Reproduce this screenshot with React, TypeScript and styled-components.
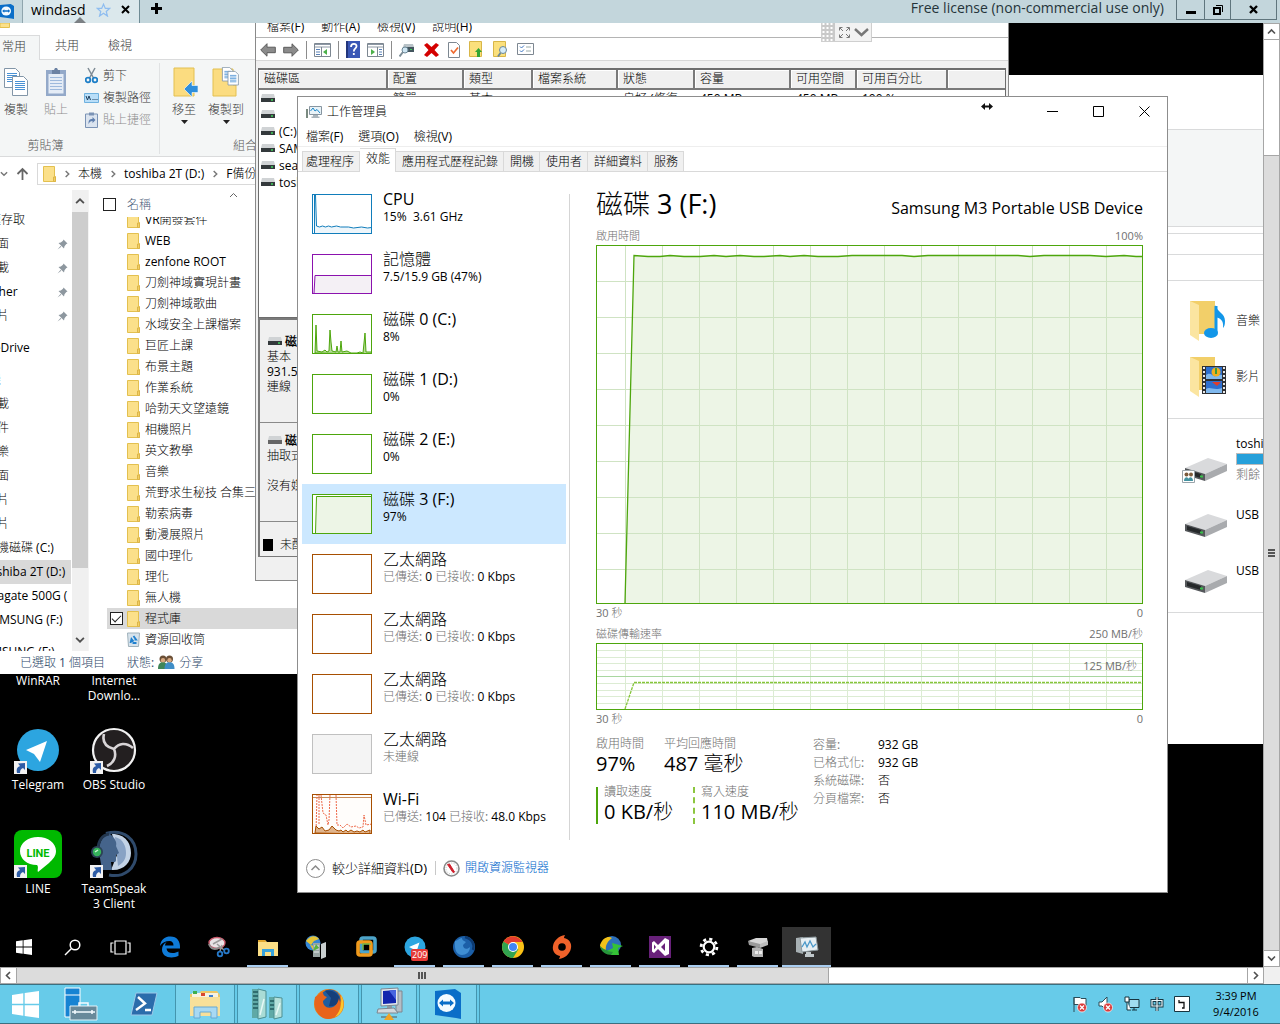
import React from "react";
import styled, { createGlobalStyle, css } from "styled-components";

const Global = createGlobalStyle`
  *, *::before, *::after { box-sizing: border-box; }
  html, body { margin: 0; height: 100%; overflow: hidden; }
  body, button, input, table {
    font-family: "Open Sans", "Noto Sans CJK TC Light", "Noto Sans CJK TC", sans-serif;
    font-size: 12px;
    line-height: 16px;
    color: #000;
  }
  button { background: none; border: 0; padding: 0; margin: 0; text-align: left; white-space: nowrap; }
  h1, h2, p, ul, dl, dd, dt { margin: 0; padding: 0; font-weight: 400; }
  ul { list-style: none; }
  a { text-decoration: none; }
  svg { display: block; flex: none; }
`;

const Screen = styled.div`
  display: flex;
  flex-direction: column;
  height: 100vh;
  background: #c3d7dd;
`;

/* ---------- viewer title bar ---------- */

const ViewerBar = styled.header`
  flex: none;
  display: flex;
  height: 23px;
  background: #c3d6dc;
`;
const ViewerTabs = styled.div`
  display: flex;
  flex: 1;
`;
const HomeTab = styled.button`
  width: 23px;
  border-right: 1px solid #8fa5ad;
`;
const SessionTab = styled.div`
  position: relative;
  display: flex;
  align-items: center;
  gap: 10px;
  width: 117px;
  padding-left: 8px;
  padding-bottom: 4px;
  background: #dbe8ec;
  border-right: 1px solid #6f8b95;
  font-size: 14px;
  line-height: 18px;
`;
const TabPointer = styled.i`
  position: absolute;
  left: 51px;
  bottom: 0;
  border: 6px solid transparent;
  border-top: 0;
  border-bottom-color: #7b8084;
`;
const AddTab = styled.button`
  padding: 3px 0 0 11px;
  align-self: flex-start;
`;
const License = styled.p`
  padding-right: 12px;
  font-size: 14px;
  line-height: 15px;
  color: #25343a;
`;
const ViewerButtons = styled.div`
  display: flex;
  height: 20px;
  margin-right: 3px;
  border: 1px solid #5f757d;
  border-top: 0;
`;
const ViewerButton = styled.button<{ $w: number }>`
  display: grid;
  place-items: center;
  width: ${(p) => p.$w}px;
  & + & { border-left: 1px solid #5f757d; }
`;

/* ---------- remote surface ---------- */

const Middle = styled.div`
  flex: 1;
  min-height: 0;
  display: flex;
`;
const Remote = styled.main`
  position: relative;
  flex: 1;
  min-width: 0;
  overflow: hidden;
  background: #000;
`;
const Win = styled.section<{ $x: number; $y: number; $w?: number; $h?: number }>`
  position: absolute;
  left: ${(p) => p.$x}px;
  top: ${(p) => p.$y}px;
  ${(p) => (p.$w ? `width: ${p.$w}px;` : "right: 0;")}
  ${(p) => p.$h && `height: ${p.$h}px;`}
  display: flex;
  flex-direction: column;
  overflow: hidden;
  background: #fff;
  white-space: nowrap;
`;

/* ---------- scroll bars ---------- */

const ScrollButton = styled.button`
  display: grid;
  place-items: center;
  width: 17px;
  height: 17px;
  flex: none;
  background: #fff;
  border: 1px solid #a6a6a6;
`;
const VBar = styled.div`
  display: flex;
  flex-direction: column;
  width: 17px;
  background: #fff;
  border-right: 1px solid #a6a6a6;
  border-left: 1px solid #a6a6a6;
  ${ScrollButton} { width: 15px; border-width: 1px 0; }
`;
const VThumb = styled.div`
  flex: 1;
  margin-top: 115px;
  display: grid;
  place-items: center;
  background: #dcdcdc;
  border-top: 1px solid #a6a6a6;
`;
const HBar = styled.div`
  flex: none;
  display: flex;
  height: 17px;
  padding-right: 16px;
  background: #f0f0f0;
`;
const HTrack = styled.div`
  flex: 1;
  background: #fff;
  border: 1px solid #a6a6a6;
  border-width: 1px 0;
`;
const HThumb = styled.div`
  display: grid;
  place-items: center;
  width: 66%;
  height: 100%;
  background: #dcdcdc;
  border-right: 1px solid #a6a6a6;
`;

/* ---------- explorer (left) ---------- */

const ExplorerTop = styled.div`
  height: 12px;
  flex: none;
`;
const RibbonTabs = styled.div`
  display: flex;
  flex: none;
  height: 25px;
  border-bottom: 1px solid #dadbdc;
`;
const RibbonTab = styled.button<{ $on?: boolean }>`
  padding: 0 14px 2px 15px;
  color: #3b3b3b;
  ${(p) =>
    p.$on &&
    css`
      width: 40px;
      padding-left: 2px;
      margin-bottom: -1px;
      background: #f4f6f6;
      border: 1px solid #dadbdc;
      border-width: 1px 1px 0 0;
    `}
`;
const Ribbon = styled.div`
  flex: none;
  display: flex;
  height: 97px;
  background: #f4f6f6;
  border-bottom: 1px solid #dadbdc;
`;
const RibbonGroup = styled.div<{ $w: number }>`
  flex: none;
  display: flex;
  flex-direction: column;
  justify-content: space-between;
  width: ${(p) => p.$w}px;
  margin: 3px 0 2px;
  border-right: 1px solid #e0e2e3;
`;
const GroupRow = styled.div`
  display: flex;
  padding-top: 4px;
`;
const GroupName = styled.p<{ $right?: boolean }>`
  padding: 0 68px 0 0;
  text-align: center;
  color: #5a5a5a;
  ${(p) => p.$right && "padding: 0 0 0 73px; text-align: left;"}
`;
const BigTool = styled.button<{ $w?: number; $off?: boolean }>`
  display: flex;
  flex-direction: column;
  align-items: center;
  gap: 2px;
  width: ${(p) => p.$w || 42}px;
  color: ${(p) => (p.$off ? "#8d8d8d" : "#3b3b3b")};
  svg:first-child { margin-bottom: 3px; }
`;
const SmallTools = styled.div`
  display: flex;
  flex-direction: column;
  gap: 6px;
  padding-left: 4px;
`;
const SmallTool = styled.button<{ $off?: boolean }>`
  display: grid;
  grid-template-columns: 15px auto;
  justify-content: start;
  justify-items: center;
  gap: 4px;
  align-items: center;
  color: ${(p) => (p.$off ? "#8d8d8d" : "#3b3b3b")};
`;
const AddressRow = styled.div`
  flex: none;
  display: flex;
  align-items: center;
  gap: 8px;
  height: 33px;
`;
const AddressBox = styled.nav`
  flex: 1;
  display: flex;
  align-items: center;
  gap: 7px;
  height: 22px;
  padding-left: 5px;
  border: 1px solid #d9d9d9;
`;
const Panes = styled.div`
  flex: 1;
  min-height: 0;
  display: flex;
`;
const NavPane = styled.ul`
  width: 72px;
  flex: none;
  overflow: hidden;
  padding-top: 18px;
`;
const NavItem = styled.li<{ $child?: boolean; $on?: boolean; $gap?: boolean; $blue?: boolean }>`
  display: flex;
  justify-content: space-between;
  align-items: center;
  height: 24px;
  margin-left: -23px;
  padding: 0 4px 0 ${(p) => (p.$child ? 8 : 0)}px;
  ${(p) => p.$gap && "margin-top: 8px;"}
  ${(p) => p.$on && "background: #d9d9d9; margin-right: 1px;"}
  ${(p) => p.$blue && "color: #3a86c8;"}
`;
const NavScroll = styled.div`
  flex: none;
  display: flex;
  flex-direction: column;
  width: 17px;
  margin-right: 14px;
  background: #f0f0f0;
  border-right: 1px solid #f4f4f4;
  div { flex: 1; margin-bottom: 61px; background: #cdcdcd; }
  svg { margin: 6px 3px; }
`;
const Files = styled.div`
  flex: 1;
  min-width: 0;
  overflow: hidden;
`;
const FileHead = styled.div`
  position: relative;
  display: flex;
  align-items: center;
  gap: 11px;
  height: 27px;
  padding-top: 2px;
  color: #4c607a;
  svg { position: absolute; left: 126px; top: 0; }
`;
const FileList = styled.ul`
  height: 433px;
  overflow: hidden;
  display: flex;
  flex-direction: column;
  justify-content: flex-end;
`;
const FileRow = styled.li<{ $on?: boolean }>`
  flex: none;
  display: flex;
  align-items: center;
  gap: ${(p) => (p.$on ? 4 : 5)}px;
  height: 21px;
  margin-left: 4px;
  padding-left: ${(p) => (p.$on ? 3 : 20)}px;
  ${(p) => p.$on && "background: #d9d9d9;"}
`;
const Check = styled.input`
  appearance: none;
  display: grid;
  place-items: center;
  width: 13px;
  height: 13px;
  margin: 0;
  border: 1px solid #222;
  background: #fff;
  &:checked::after {
    content: "";
    width: 9px;
    height: 5px;
    margin-bottom: 3px;
    border: 1px solid #222;
    border-width: 0 0 1px 1px;
    transform: rotate(-45deg);
  }
`;
const FileLabel = styled.label`
  display: flex;
  align-items: center;
  gap: 5px;
`;
const Status = styled.footer`
  flex: none;
  display: flex;
  align-items: center;
  gap: 22px;
  height: 23px;
  padding-left: 20px;
  color: #2d4768;
  span { display: flex; align-items: center; gap: 4px; }
`;

/* ---------- disk management ---------- */

const DiskMenu = styled.nav`
  display: flex;
  gap: 17px;
  height: 15px;
  flex: none;
  padding-left: 11px;
  border-bottom: 1px solid #b4b4b4;
  button { margin-top: -6px; }
`;
const DiskTools = styled.div`
  display: flex;
  align-items: center;
  gap: 7px;
  height: 23px;
  flex: none;
  padding: 1px 0 0 4px;
  border-bottom: 1px solid #d6d6d6;
`;
const ToolSet = styled.div`
  display: flex;
  align-items: center;
  gap: 9px;
`;
const ToolSep = styled.i`
  width: 1px;
  height: 18px;
  background: #8c8c8c;
`;
const VolTable = styled.table`
  table-layout: fixed;
  width: 748px;
  border-collapse: collapse;
  th {
    height: 19px;
    padding: 0 6px 0 5px;
    text-align: left;
    font-weight: 400;
    background: #f0f0f0;
    border-right: 2px solid #7a7a7a;
    border-bottom: 2px solid #7a7a7a;
    box-shadow: inset 1px 1px #fff;
  }
  th:last-child { border-right: 0; }
  td { height: 17px; padding: 0 6px; line-height: 15px; }
  td:first-child { padding-left: 2px; }
`;
const VolName = styled.span`
  display: flex;
  align-items: center;
  gap: 4px;
`;
const VolBox = styled.div`
  height: 250px;
  flex: none;
  margin: 7px 2px 0 2px;
  border: 1px solid #6d6d6d;
  border-top-width: 2px;
  background: #fff;
  overflow: hidden;
`;
const DiskPane = styled.div`
  flex: none;
  margin: 0 2px;
  border: 2px solid #7a7a7a;
  border-width: 2px 0 1px 2px;
`;
const DiskCard = styled.div<{ $h: number; $top: number }>`
  height: ${(p) => p.$h}px;
  padding: ${(p) => p.$top}px 0 0 7px;
  line-height: 15px;
  border-bottom: 1px solid #8a8a8a;
  b { display: flex; align-items: center; gap: 3px; padding-left: 1px; }
`;
const Legend = styled.p`
  display: flex;
  align-items: center;
  gap: 7px;
  height: 34px;
  padding: 12px 0 0 3px;
  i { width: 10px; height: 12px; background: #000; }
`;

/* ---------- right explorer ---------- */

const PcBand = styled.div<{ $h: number; $c?: string }>`
  flex: none;
  height: ${(p) => p.$h}px;
  background: ${(p) => p.$c || "#fff"};
  border-bottom: 1px solid #d9dadb;
`;
const PcGroup = styled.div<{ $drives?: boolean }>`
  display: flex;
  flex-direction: column;
  gap: 6px;
  padding: 15px 0 16px 173px;
  border-bottom: 1px solid #d9dadb;
  ${(p) => p.$drives && "svg { margin: 22px 4px 0 0; }"}
`;
const PcItem = styled.button`
  display: grid;
  grid-template-columns: 50px 1fr;
  align-items: center;
  gap: 4px;
  height: 50px;
  svg { justify-self: center; }
`;
const Capacity = styled.div`
  height: 12px;
  margin: 1px 0 2px;
  background: #26a0da;
  border: 1px solid #bcbcbc;
`;
const Muted = styled.span`
  color: #6f6f6f;
`;

/* ---------- task manager ---------- */

const TmTitle = styled.header`
  display: flex;
  align-items: center;
  height: 29px;
  padding-left: 8px;
  h1 { flex: 1; padding-left: 5px; font-size: 12px; }
`;
const CaptionButton = styled.button`
  display: grid;
  place-items: center;
  width: 46px;
  height: 28px;
`;
const TmMenu = styled.nav`
  display: flex;
  gap: 15px;
  height: 21px;
  padding: 2px 8px 0;
  border-bottom: 1px solid #eeeeee;
`;
const TmTabs = styled.div`
  display: flex;
  align-items: flex-end;
  height: 25px;
  padding-left: 4px;
  border-bottom: 1px solid #d9d9d9;
`;
const TmTab = styled.button<{ $on?: boolean }>`
  height: 20px;
  padding: 0 5px 0 6px;
  background: #f0f0f0;
  border: 1px solid #d9d9d9;
  border-left-width: 0;
  border-bottom: 0;
  &:first-child { padding: 0 5px 0 3px; border-left-width: 1px; }
  ${(p) =>
    p.$on &&
    css`
      height: 24px;
      padding: 0 5px 4px 6px;
      margin-bottom: -1px;
      background: #fff;
    `}
`;
const TmBody = styled.div`
  display: flex;
  padding: 12px 24px 0 4px;
`;
const ResourceList = styled.ul`
  width: 264px;
  flex: none;
`;
const Resource = styled.button<{ $on?: boolean }>`
  display: flex;
  align-items: flex-start;
  gap: 11px;
  width: 100%;
  height: 60px;
  padding: 10px;
  background: ${(p) => (p.$on ? "#cce8ff" : "transparent")};
`;
const ResourceText = styled.span`
  margin-top: -5px;
  line-height: 16px;
  white-space: pre;
`;
const ResourceName = styled.span`
  display: block;
  font-size: 16px;
  line-height: 20px;
`;
const Divider = styled.i`
  flex: none;
  width: 1px;
  margin: 10px 26px 4px 3px;
  background: #d5d5d5;
`;
const Detail = styled.div`
  flex: 1;
  min-width: 0;
`;
const DetailHead = styled.div`
  display: flex;
  justify-content: space-between;
  align-items: baseline;
  height: 44px;
  padding-top: 4px;
  h2 { font-size: 27px; line-height: 32px; }
  p { font-size: 16px; line-height: 24px; }
`;
const Caption = styled.div`
  display: flex;
  justify-content: space-between;
  height: 17px;
  font-size: 11px;
  line-height: 15px;
  color: #707070;
`;
const Axis = styled(Caption)`
  height: 22px;
  line-height: 18px;
`;
const Plot = styled.div<{ $h: number }>`
  position: relative;
  height: ${(p) => p.$h}px;
  border: 1px solid #4da60c;
  svg { width: 100%; height: 100%; }
`;
const PlotMark = styled.span`
  position: absolute;
  right: 5px;
  top: 14px;
  font-size: 11px;
  line-height: 16px;
  color: #707070;
`;
const Stats = styled.div`
  display: flex;
  padding-top: 4px;
`;
const StatGrid = styled.dl`
  width: 217px;
  display: flex;
  flex-direction: column;
  gap: 11px;
`;
const Stat = styled.div<{ $line?: "solid" | "dotted"; $w: number }>`
  width: ${(p) => p.$w}px;
  height: 40px;
  dt { line-height: 16px; color: #707070; }
  dd { font-size: 20px; line-height: 24px; }
  ${(p) =>
    p.$line &&
    css`
      height: 37px;
      padding-left: 6px;
      border-left: 2px ${p.$line === "solid" ? "solid #4da60c" : "dashed #8cc63f"};
      dt { margin-top: -3px; }
    `}
`;
const StatRow = styled.div`
  display: flex;
`;
const Facts = styled.dl`
  display: grid;
  grid-template-columns: 65px auto;
  align-content: start;
  line-height: 18px;
  dt { color: #707070; }
`;
const TmFooter = styled.footer`
  display: flex;
  align-items: center;
  height: 48px;
  padding-left: 8px;
  button { display: flex; align-items: center; gap: 7px; font-size: 13px; }
  a { display: flex; align-items: center; gap: 5px; color: #0066cc; }
  i { width: 1px; height: 14px; margin: 0 7px 0 8px; background: #c8c8c8; }
`;

/* ---------- desktop ---------- */

const Desktop = styled.div`
  position: absolute;
  left: 0;
  top: 599px;
  display: grid;
  grid-template-columns: repeat(2, 76px);
  grid-auto-rows: 104px;
`;
const Shortcut = styled.button`
  position: relative;
  display: flex;
  flex-direction: column;
  align-items: center;
  gap: 3px;
  padding: 0 3px;
  text-align: center;
  line-height: 15px;
  color: #fff;
  white-space: normal;
  > svg:nth-of-type(2) { position: absolute; left: 14px; top: 35px; }
`;
const Blank = styled.i`
  height: 48px;
`;
const InnerBar = styled.nav`
  position: absolute;
  left: 0;
  right: 0;
  bottom: 0;
  display: flex;
  height: 40px;
  background: #000;
`;
const InnerButton = styled.button<{ $w?: number; $run?: boolean; $on?: boolean }>`
  position: relative;
  display: grid;
  place-items: center;
  width: ${(p) => p.$w || 49}px;
  color: #fff;
  ${(p) => p.$on && "background: #333;"}
  ${(p) =>
    (p.$run || p.$on) &&
    css`
      &::after {
        content: "";
        position: absolute;
        left: ${p.$on ? 0 : 4}px;
        right: ${p.$on ? 0 : 4}px;
        bottom: 0;
        height: 2px;
        background: #a9cdf0;
      }
    `}
`;
const Badge = styled.span`
  position: absolute;
  left: 21px;
  top: 22px;
  padding: 0 1px;
  border-radius: 2px;
  background: #e53935;
  color: #fff;
  font-size: 9px;
  line-height: 12px;
`;
const FloatBar = styled.div`
  position: absolute;
  left: 821px;
  top: 0;
  display: flex;
  align-items: center;
  gap: 4px;
  width: 51px;
  height: 19px;
  background: #f2f2f2;
  border: 1px solid #cfcfcf;
  border-top: 0;
`;
const ResizeCursor = styled.svg`
  position: absolute;
  left: 981px;
  top: 79px;
`;

/* ---------- host taskbar ---------- */

const HostBar = styled.footer`
  flex: none;
  display: flex;
  height: 40px;
  background: #67cbe9;
  border: 1px solid #3b6f80;
  border-width: 1px 0;
`;
const HostButton = styled.button<{ $w: number; $open?: boolean }>`
  display: grid;
  place-items: center;
  width: ${(p) => p.$w}px;
  ${(p) =>
    p.$open &&
    css`
      margin-right: 2px;
      background: #7ad3ed;
      border: 1px solid #4495ae;
      border-width: 0 1px;
      box-shadow: 2px 0 #67cbe9, 3px 0 #4495ae;
    `}
`;
const Tray = styled.div`
  flex: 1;
  display: flex;
  justify-content: flex-end;
  align-items: center;
  gap: 10px;
`;
const Clock = styled.time`
  width: 72px;
  margin-right: 8px;
  text-align: center;
  font-size: 11px;
  line-height: 16px;
`;

/* ---------- icons ---------- */

const Chevron = ({ d, c = "#505050", s = 9 }: { d: "u" | "d" | "l" | "r"; c?: string; s?: number }) => (
  <svg width={s} height={s} viewBox="0 0 9 9" fill="none" stroke={c} strokeWidth="1.600">
    <path d={{ u: "M1 6.5 4.5 3 8 6.5", d: "M1 2.5 4.5 6 8 2.5", l: "M6 1 2.5 4.5 6 8", r: "M3 1l3.5 3.5L3 8" }[d]} />
  </svg>
);
const Folder = () => (
  <svg width="13" height="16" viewBox="0 0 13 16">
    <path d="M.5.5h11v10h1v5H.5z" fill="#fbe08a" stroke="#e3c04f" />
    <path d="M10.5 11h2v4.5h-2z" fill="#f3cf63" stroke="#dcb548" />
  </svg>
);
const Bin = () => (
  <svg width="13" height="15" viewBox="0 0 13 15">
    <path d="M.5 1h12l-1 13.500h-10z" fill="#d7e3ec" stroke="#9fb1bb" />
    <path d="M6.500 4 9 7.500H7.500M3.500 11l1-4 2 2.500M9.500 11H5.500" fill="none" stroke="#2181cf" strokeWidth="1.900" />
  </svg>
);
const People = () => (
  <svg width="17" height="15" viewBox="0 0 17 15">
    <circle cx="5" cy="4" r="3.500" fill="#6b4f36" />
    <path d="M0 14c0-5 2-7 5-7s4 2 4 7z" fill="#3f8558" />
    <circle cx="11.500" cy="4" r="3.500" fill="#6b4f36" />
    <path d="M6.500 14c0-5 2-7 5-7s5 2 5 7z" fill="#3f8dc6" />
    <circle cx="5" cy="5.200" r="2.200" fill="#d9a981" />
    <circle cx="11.500" cy="5.200" r="2.200" fill="#d9a981" />
  </svg>
);
const Pin = () => (
  <svg width="11" height="11" viewBox="0 0 11 11">
    <path d="M6.500.5 10.500 4.500 9.300 5 7.500 7.200 7 9.500 1.500 4l2.300-.6L6 1.700zM3.500 7 .5 10.500 4.300 7.700z" fill="#8d979f" />
  </svg>
);
const Paper = ({ x, y, w = 15, h = 19 }: { x: number; y: number; w?: number; h?: number }) => (
  <g transform={`translate(${x} ${y})`}>
    <path d={`M.5.5h${w - 5}l4 4v${h - 5}H.5z`} fill="#fff" stroke="#8296a8" />
    {[5, 7, 9, 11, 13].map((l) => (
      <path key={l} d={`M3 ${l + 0.5}h${w - 6}`} stroke="#4a92d4" />
    ))}
  </g>
);
const CopyIcon = () => (
  <svg width="26" height="30" viewBox="0 0 26 30">
    <Paper x={1} y={1} w={16} h={20} />
    <Paper x={9} y={9} w={16} h={20} />
  </svg>
);
const PasteIcon = () => (
  <svg width="22" height="30" viewBox="0 0 22 30">
    <path d="M1 3h20v26H1z" fill="#93a9c9" />
    <path d="M3.500 7h15v19.500h-15z" fill="#e4ecf6" />
    <path d="M7 3h2l1-2h2l1 2h2v4H7z" fill="#6b82a3" />
    <path d="M5 10.500h12M5 13.500h12M5 16.500h12M5 19.500h12M5 22.500h12" stroke="#9db9dc" />
  </svg>
);
const Scissors = () => (
  <svg width="13" height="17" viewBox="0 0 13 17" fill="none">
    <path d="M3 1l5.500 10M10 1 4.500 11" stroke="#7e8b95" strokeWidth="1.500" />
    <circle cx="3" cy="13" r="2.300" stroke="#1e7fc8" strokeWidth="1.800" />
    <circle cx="10" cy="13" r="2.300" stroke="#1e7fc8" strokeWidth="1.800" />
  </svg>
);
const PathIcon = () => (
  <svg width="15" height="10" viewBox="0 0 15 10">
    <path d="M.5.5h14v9H.5z" fill="#b9def8" stroke="#6fb1de" />
    <path d="M2 3l1.500 4L5 3l1.500 4M8.500 6.500h1M10.500 6.500h1M12.500 6.500h1" stroke="#1d3f5e" fill="none" />
  </svg>
);
const ShortcutPaste = () => (
  <svg width="13" height="16" viewBox="0 0 13 16">
    <path d="M.5 2h12v13.500H.5z" fill="#dbe4ef" stroke="#7b93b5" />
    <path d="M4 .500h5v3H4z" fill="#7b93b5" />
    <path d="M3.500 12c0-4 1-5 4-5V5l3 3-3 3V9c-2 0-3 1-4 3z" fill="#5f7fae" />
  </svg>
);
const MoveTo = () => (
  <svg width="28" height="30" viewBox="0 0 28 30">
    <path d="M4 1h20v28H4z" fill="#fbdc80" stroke="#e3c050" />
    <path d="M28 18.500h-6V14l-8 8 8 8v-4.500h6z" fill="#2f8fdc" stroke="#fff" strokeWidth=".6" />
  </svg>
);
const CopyTo = () => (
  <svg width="28" height="30" viewBox="0 0 28 30">
    <path d="M1 2h20v16h3v11H1z" fill="#fbdc80" stroke="#e3c050" />
    <g transform="translate(10 0) scale(.8)">
      <Paper x={0} y={0} w={14} h={18} />
      <Paper x={7} y={5} w={14} h={18} />
    </g>
  </svg>
);
const Down = () => (
  <svg width="7" height="4" viewBox="0 0 7 4">
    <path d="M0 0h7L3.500 4z" fill="#222" />
  </svg>
);
const DriveSmall = ({ off }: { off?: boolean }) => (
  <svg width="14" height="9" viewBox="0 0 14 9">
    <path d="M1 0h12l1 4H0z" fill="#d0d3d5" />
    <path d="M0 4h14v4H0z" fill={off ? "#666" : "#34393c"} />
    {!off && <path d="M10 6h2" stroke="#3fd35b" strokeWidth="1.500" />}
  </svg>
);
const Arrow = ({ flip }: { flip?: boolean }) => (
  <svg width="16" height="14" viewBox="0 0 16 14">
    <path d="M7 .700v3.500h8.300v5.500H7v3.500L.700 7z" fill="#8b8b8b" stroke="#5c5c5c" transform={flip ? "rotate(180 8 7)" : undefined} />
  </svg>
);
const PaneIcon = ({ flip }: { flip?: boolean }) => (
  <svg width="17" height="14" viewBox="0 0 17 14">
    <path d="M.5.500h16v13H.5z" fill="#fff" stroke="#7d8791" />
    <path d="M1 1.500h15M1 4h15" stroke="#8d98a5" />
    <path d={flip ? "M10.500 4v9" : "M7.500 4v9"} stroke="#7d8791" />
    <path d={flip ? "M12 6.500h3M12 9h3M12 11.500h3" : "M2 6.500h4M2 9h4M2 11.500h4"} stroke="#5a82b8" />
    <path d={flip ? "M4 6l4 3-4 3z" : "M13 6 9 9l4 3z"} fill="#4cb04a" />
  </svg>
);
const HelpIcon = () => (
  <svg width="14" height="17" viewBox="0 0 14 17">
    <path d="M0 0h14v17H0z" fill="#3a57b5" />
    <path d="M0 0h2v17H0z" fill="#23367c" />
    <path d="M5 6c0-4 6-4 5.500-.5C10.300 7.500 7.800 7.500 7.800 10.500M7.800 12v2" fill="none" stroke="#fff" strokeWidth="1.800" />
  </svg>
);
const DriveLens = () => (
  <svg width="16" height="14" viewBox="0 0 16 14">
    <path d="M4 4h11v5H4z" fill="#44565f" />
    <path d="M4 4h11l-1-3H5z" fill="#b9c3c8" />
    <path d="M11 6.500h2" stroke="#3fd35b" />
    <circle cx="6" cy="7" r="3" fill="#cfe6f3" stroke="#6c8796" />
    <path d="M4 9 .5 13.500" stroke="#7c8d97" strokeWidth="2" />
  </svg>
);
const RedX = () => (
  <svg width="15" height="14" viewBox="0 0 15 14">
    <path d="M3 0l4.500 4L12 0l3 2-4.500 5L15 12l-3 2-4.500-4L3 14l-3-2 4.500-5L0 2z" fill="#d40000" />
  </svg>
);
const CheckPage = () => (
  <svg width="12" height="16" viewBox="0 0 12 16">
    <path d="M.5.500h8l3 3v12H.5z" fill="#fff" stroke="#7d8791" />
    <path d="M3 8l2.500 3L10 5.500" fill="none" stroke="#ef6a2f" strokeWidth="1.700" />
  </svg>
);
const FolderUp = ({ lens }: { lens?: boolean }) => (
  <svg width="15" height="17" viewBox="0 0 15 17">
    <path d="M.5.500h12v15H.5z" fill="#fbe07c" stroke="#d8b648" />
    {lens ? (
      <>
        <circle cx="10" cy="9" r="3.500" fill="#d5ecf8" stroke="#6c8796" />
        <path d="M7.500 12 5 15.500" stroke="#6c8796" strokeWidth="2" />
      </>
    ) : (
      <path d="M9.500 7 13 11h-2v5H8v-5H6z" fill="#32a532" />
    )}
  </svg>
);
const ListIcon = () => (
  <svg width="17" height="13" viewBox="0 0 17 13">
    <path d="M.5.500h16v11H.5z" fill="#fff" stroke="#7d8791" />
    <path d="M9 4h5M9 8h5" stroke="#9aa" />
    <path d="M3 3.500l1.500 1.500L7 2.500M3 7.500 4.500 9 7 6.500" fill="none" stroke="#3b74c2" />
  </svg>
);
const TmIcon = () => (
  <svg width="16" height="14" viewBox="0 0 16 14">
    <path d="M0 4h2v9H0z" fill="#7a8a80" />
    <path d="M3.500 1.500h12v8h-12z" fill="#e9f3f8" stroke="#8795a0" />
    <path d="M4.500 6l2.500-3 2 3L11 4.500 14 8" fill="none" stroke="#1c87c9" />
    <path d="M7 10h5v1.500h1.500V13h-8v-1.500H7z" fill="#a9b4bb" />
  </svg>
);
const BigFolder = ({ kind }: { kind: "music" | "film" }) => (
  <svg width="38" height="42" viewBox="0 0 38 42">
    <path d="M2 1h25v33H2z" fill="#f2cf69" />
    <path d="M2 1l9 4v36l-9-6z" fill="#fbe5a0" />
    {kind === "music" ? (
      <>
        <path d="M28 6v27" stroke="#1296e8" strokeWidth="3" />
        <path d="M27 5c2 7 10 8 10 16 0 4-1 6-2 7 1-8-3-10-8-11z" fill="#1296e8" />
        <ellipse cx="23" cy="33" rx="7" ry="5" fill="#1296e8" />
      </>
    ) : (
      <>
        <path d="M14 10h24v28H14z" fill="#2e3034" />
        <path d="M18 11h16v12H18zM18 25h16v12H18z" fill="#2d6fd0" />
        <path d="M18 19c4-3 6 0 8 1s4-2 8-1v4H18zM18 33c4-3 8 2 16-1v5H18z" fill="#7fb8ee" />
        <circle cx="28" cy="16" r="4.500" fill="#f1ae1d" />
        <path d="M24 26h9l-4 4z" fill="#e03c2b" />
        <path d="M27 12h2v6h-2z" fill="#3c9a3a" />
        <path d="M16 11v27M36 11v27" stroke="#e9e9e9" strokeWidth="2" strokeDasharray="2 2" />
      </>
    )}
  </svg>
);
const BigDrive = ({ shared }: { shared?: boolean }) => (
  <svg width="46" height="28" viewBox="0 0 46 28">
    <path d="M3 12 26 2l19 6-22 10z" fill="#d9dadc" />
    <path d="M23 18 45 8v7L23 25z" fill="#a9abae" />
    <path d="M3 12l20 6v7L3 19z" fill="#55585b" />
    <path d="M5 14l14 4v4L5 18z" fill="#25282a" />
    <path d="M18 20.500h3" stroke="#38c24b" strokeWidth="2" />
    {shared && (
      <>
        <path d="M.5 14.500h12v12H.5z" fill="#fff" stroke="#9aa4aa" />
        <circle cx="4.500" cy="18.500" r="2" fill="#7c5b3c" />
        <circle cx="9" cy="18.500" r="2" fill="#7c5b3c" />
        <path d="M2 25c0-5 5-5 5 0zM6 25c0-5 5-5 5 0z" fill="#4292a0" />
      </>
    )}
  </svg>
);
const LinkArrow = () => (
  <svg width="13" height="13" viewBox="0 0 13 13">
    <path d="M0 0h13v13H0z" fill="#f2f2f2" />
    <path d="M3 12c-1-5 1-6 3-7L4 2.500 11 2v7L9 7c-2 1-3 2-3 5z" fill="#2d5ca6" />
  </svg>
);
const Plane = ({ s = 48 }: { s?: number }) => (
  <svg width={s} height={s} viewBox="0 0 48 48">
    <circle cx="24" cy="24" r="21" fill="#2ca5e0" />
    <path d="M12 24 33 15l-7 21-6-8z" fill="#fff" />
  </svg>
);
const Obs = () => (
  <svg width="48" height="48" viewBox="0 0 48 48" fill="none">
    <circle cx="24" cy="24" r="21" fill="#231f20" stroke="#f2f2f2" strokeWidth="2.200" />
    <path d="M14 8c-2 8 2 13 10 15M24 23c5-6 12-7 19-1M24 23c3 7 0 14-7 17" stroke="#d8d4d6" strokeWidth="2.600" />
  </svg>
);
const LineIcon = () => (
  <svg width="48" height="48" viewBox="0 0 48 48">
    <rect width="48" height="48" rx="8" fill="#00b900" />
    <path d="M24 7c10 0 18 6 18 14 0 5-3 8-7 12l-11 9c-1-2 1-5-1-7C13 35 6 29 6 21 6 13 14 7 24 7z" fill="#fff" />
    <text x="24" y="27" textAnchor="middle" fontSize="11" fontWeight="700" fontFamily="Roboto, sans-serif" fill="#00b900">
      LINE
    </text>
  </svg>
);
const TeamSpeak = () => (
  <svg width="48" height="48" viewBox="0 0 48 48">
    <path d="M16 3.500c18-5 30 6 30 20.500S34 48 19 45" fill="none" stroke="#2f4a6b" strokeWidth="3" />
    <path d="M22 4c14 0 19 10 19 19s-7 18-20 17l6-15z" fill="#c3d3e6" />
    <path d="M25 7c8 2 11 9 11 16 0 6-3 10-8 13z" fill="#88a2c4" />
    <path d="M9 22C9 10 14 5 20 4c5 4 7 8 6 12l3 7-3 2v5c0 3-3 2-5 2l1 8H12z" fill="#45648b" />
    <path d="M8 20C8 10 13 5 19 4" fill="none" stroke="#23374f" strokeWidth="3" />
    <circle cx="7" cy="22" r="6" fill="#2c4255" />
    <circle cx="7" cy="22" r="4.200" fill="#35b35a" />
    <path d="M5 22l3-2" stroke="#c8f5d0" strokeWidth="1.500" />
  </svg>
);
const WinLogo = ({ s }: { s: number }) => (
  <svg width={s} height={s} viewBox="0 0 16 16" fill="#fff">
    <path d="M0 2.300 6.700 1.300v6.300H0zM7.500 1.200 16 0v7.600H7.500zM0 8.400h6.700v6.300L0 13.700zM7.500 8.400H16V16l-8.500-1.200z" />
  </svg>
);
const Glass = () => (
  <svg width="17" height="17" viewBox="0 0 17 17" fill="none" stroke="#fff" strokeWidth="1.500">
    <circle cx="11" cy="6" r="4.800" />
    <path d="M7.500 9.500 1 16" />
  </svg>
);
const TaskView = () => (
  <svg width="21" height="15" viewBox="0 0 21 15" fill="none" stroke="#fff" strokeWidth="1.200">
    <path d="M5 1h11v13H5zM3.500 3H1v9h2.500M17.500 3H20v9h-2.500" />
  </svg>
);
const Edge = () => (
  <svg width="22" height="22" viewBox="0 0 22 22">
    <path d="M1 10C2 3 6 .500 11.500.500 18 .500 21.500 5 21 12.500H7.500c.3 3 2.500 4.500 6 4.500 2.500 0 4.500-.7 6-1.500v4.300C17.500 21 15 21.500 12.500 21.500 7 21.500 3 18.500 3 13.500c0-3.300 1.700-6 4.700-7.500-1 1-1.500 2-1.700 3.500h8.500c0-3-1.500-4.500-4-4.500C6.500 5 3 6.500 1 10z" fill="#0f7bd8" />
  </svg>
);
const Snip = () => (
  <svg width="22" height="22" viewBox="0 0 22 22" fill="none">
    <ellipse cx="9" cy="7" rx="8" ry="5.500" fill="#e8e4e6" stroke="#c85a6c" strokeWidth="1.300" />
    <path d="M1 8c2 6 7 6 11 3" stroke="#8c8c8c" strokeWidth="2" />
    <path d="M5 8l9-5M9 8l7 6M14 9l-2 6" stroke="#9a9a9a" strokeWidth="1.500" />
    <circle cx="12" cy="18" r="2.300" stroke="#2679c9" strokeWidth="1.800" />
    <circle cx="18.500" cy="15" r="2.300" stroke="#2679c9" strokeWidth="1.800" />
  </svg>
);
const FolderBar = () => (
  <svg width="22" height="19" viewBox="0 0 22 19">
    <path d="M1 2h7l2 2h11v14H1z" fill="#fbdf86" />
    <path d="M1 2h7l1 2H1z" fill="#e2a82f" />
    <path d="M5 18v-7h12v7h-3v-4H8v4z" fill="#37a3dd" />
  </svg>
);
const GlobeServer = () => (
  <svg width="24" height="24" viewBox="0 0 24 24">
    <circle cx="8" cy="8" r="7.500" fill="#3486d6" />
    <path d="M1 6c4-6 10-6 13-2l-5 2-3 4zM5 10l5 1-2 4z" fill="#e6c437" />
    <path d="M8 8h7v14H8z" fill="#99a5a4" />
    <path d="M16 9l5-2v15l-5 2z" fill="#c9cfd0" />
    <path d="M9 11h5M9 14h5M9 17h5" stroke="#e9eeee" />
    <path d="M11 9l-3 7 6-3z" fill="#58b43c" />
  </svg>
);
const Vm = () => (
  <svg width="22" height="22" viewBox="0 0 22 22" fill="none" strokeWidth="3.600">
    <rect x="6" y="2" width="14" height="14" rx="2" stroke="#4da4c9" />
    <rect x="3" y="6" width="13" height="13" rx="2" stroke="#f09a1c" />
    <path d="M8 14V8h8" stroke="#7fbf4a" strokeWidth="1.500" />
  </svg>
);
const FoxBlue = () => (
  <svg width="24" height="24" viewBox="0 0 24 24">
    <circle cx="12" cy="12" r="11" fill="#1b5fa8" />
    <path d="M3 6c3 0 4-3 7-3 0 3 3 3 4 4l-3 3c0 4 4 5 7 2 0 5-4 8-8 8-5 0-8-5-7-14z" fill="#3f8ed2" />
    <path d="M13 2c7 2 10 7 8 13" fill="none" stroke="#0c3a72" strokeWidth="2.400" />
  </svg>
);
const Chrome = () => (
  <svg width="22" height="22" viewBox="0 0 22 22">
    <circle cx="11" cy="11" r="11" fill="#fbc116" />
    <path d="M11 11 1.500 5.500A11 11 0 0 0 11 22l5.500-9z" fill="#31a350" />
    <path d="M11 11 1.500 5.500A11 11 0 0 1 20.500 6H11z" fill="#e33b2e" />
    <circle cx="11" cy="11" r="5" fill="#fff" />
    <circle cx="11" cy="11" r="4" fill="#4285f4" />
  </svg>
);
const Origin = () => (
  <svg width="20" height="24" viewBox="0 0 20 24">
    <path d="M13 0c-1 2-1 3-1 3 5 1 8 5 7 10-1 6-6 10-12 11 1-2 1-3 1-3-5-1-8-5-7-10C2 5 7 1 13 0z" fill="#f0622a" />
    <circle cx="10" cy="12" r="3.800" fill="#000" />
  </svg>
);
const Idm = () => (
  <svg width="24" height="22" viewBox="0 0 24 22">
    <circle cx="13" cy="9" r="9" fill="#2d6fb8" />
    <path d="M1 9C4 1 10 0 13 2c-4 3-7 7-6 13-3-1-6-2-6-6z" fill="#f2c21a" />
    <path d="M1 10c1 6 6 9 12 9l2-4c-6 0-10-1-14-5z" fill="#26953a" />
    <path d="M13 7l11 3-5 2 1 7h-8l2-3-6-1 6-3z" fill="#35c236" />
  </svg>
);
const Vs = () => (
  <svg width="22" height="22" viewBox="0 0 22 22">
    <path d="M0 0h22v22H0z" fill="#68217a" />
    <path d="M16 2l4 2v14l-4 2-7-7-4 4-2-1.500V6.500L5 5l4 4zM16 7l-4 4 4 4zM5 8.500v5L7 11z" fill="#fff" fillRule="evenodd" />
  </svg>
);
const Gear = () => (
  <svg width="20" height="20" viewBox="0 0 20 20" fill="none" stroke="#fff">
    <circle cx="10" cy="10" r="5.300" strokeWidth="2.200" />
    <circle cx="10" cy="10" r="7.900" strokeWidth="2.800" strokeDasharray="3.100 3.100" />
  </svg>
);
const Device = () => (
  <svg width="22" height="22" viewBox="0 0 22 22">
    <path d="M1 5 9 2h11l1 5-8 4z" fill="#d6d6d6" />
    <path d="M1 5l12 3v4L2 9z" fill="#9a9a9a" />
    <path d="M13 8l8-3v4l-8 3z" fill="#bcbcbc" />
    <path d="M5 12l5-1 6 2v8H7l-2-1z" fill="#b5b5b5" />
    <path d="M8 15h3v3H8zM12 15h3v3h-3z" fill="#ececec" />
  </svg>
);
const TmBig = () => (
  <svg width="24" height="22" viewBox="0 0 24 22">
    <path d="M1 2l7-1v17l-7-2z" fill="#a7b0b3" />
    <path d="M5 2l16-1 2 13-16 2z" fill="#e6eef2" stroke="#8b979c" />
    <path d="M7 11l3-5 2 5 3-6 3 6 3-3" fill="none" stroke="#4a98c9" strokeWidth="1.300" />
    <path d="M11 16h5v2h3v3H10v-3h1z" fill="#bfc7ca" />
  </svg>
);
const TvLogo = ({ s, w }: { s: number; w?: number }) => (
  <svg width={w || s} height={s} viewBox="0 0 26 30" preserveAspectRatio="none">
    <path d="M0 2 20 0l6 4v26l-5-1-21-3z" fill="#0a6ec8" />
    <circle cx="11.500" cy="14" r="9" fill="#f4fbff" />
    <path d="M4 14l4-3.500v2h7v-2l4 3.500-4 3.500v-2H8v2z" fill="#0a6ec8" />
  </svg>
);
const ServerMgr = () => (
  <svg width="34" height="34" viewBox="0 0 34 34">
    <path d="M1 1h15v29H1z" fill="#1683d3" stroke="#fff" />
    <path d="M1 8h15" stroke="#fff" />
    <path d="M6 19h27v14H6z" fill="#68899a" stroke="#e2f2f8" />
    <path d="M15 19v-3h9v3M8 25h23M11 23v4M28 23v4" fill="none" stroke="#f4fbff" strokeWidth="1.500" />
  </svg>
);
const PowerShell = () => (
  <svg width="28" height="24" viewBox="0 0 28 24">
    <path d="M6 1h21l-5 22H1z" fill="#2b6cab" stroke="#9cc8e8" />
    <path d="M8 5l7 6.500L6 18M15 18h6" fill="none" stroke="#fff" strokeWidth="2.400" />
  </svg>
);
const HostFolder = () => (
  <svg width="32" height="30" viewBox="0 0 32 30">
    <path d="M1 5h9l2-3h16l3 4v21H1z" fill="#eec765" />
    <path d="M3 4h26v4H3z" fill="#f7f2e2" />
    <path d="M4 2h4v3H4z" fill="#3fae4c" />
    <path d="M12 4h4v3h-4z" fill="#d9482f" />
    <path d="M20 6h4v2h-4z" fill="#3f7fd0" />
    <path d="M1 8h30v19H1z" fill="#f8e09a" />
    <path d="M5 29V18h23v11h-6v-6H11v6z" fill="#a8d9f3" stroke="#67a9d4" />
  </svg>
);
const Servers = () => (
  <svg width="32" height="32" viewBox="0 0 32 32">
    <path d="M1 1h6v29H1z" fill="#5fa9a6" />
    <path d="M7 1l8 2v26l-8 2z" fill="#a9dcd6" stroke="#4d8f92" />
    <path d="M18 9h5v21h-5z" fill="#5fa9a6" />
    <path d="M23 9l8 1v19l-8 2z" fill="#b4e0da" stroke="#4d8f92" />
    <path d="M2 4h5M2 8h5M2 12h5M2 16h5M2 20h5M19 13h4M19 17h4M19 21h4" stroke="#22595e" strokeWidth="1.500" />
    <path d="M9 27l4-16M25 27l4-12" stroke="#e6f8f5" strokeWidth="1.500" />
  </svg>
);
const Firefox = () => (
  <svg width="32" height="32" viewBox="0 0 32 32">
    <circle cx="16" cy="16" r="15" fill="#ea7b17" />
    <circle cx="17" cy="12" r="10.500" fill="#1f5d9f" />
    <path d="M12 3c8-2 14 3 15 9-3 5-7 7-11 6l2-8z" fill="#153f7a" />
    <path d="M2 9c3-1 5-4 8-5 0 3 1 4 4 5l-4 4c0 5 4 8 10 6 4-2 5-5 6-9 4 12-3 21-11 21C6 31 0 21 2 9z" fill="#e8641b" />
    <path d="M28 7c5 9 2 19-6 22 5-5 7-12 6-22z" fill="#fbc82f" />
  </svg>
);
const Rdp = () => (
  <svg width="32" height="34" viewBox="0 0 32 34">
    <path d="M23 4h6v21h-6z" fill="#b5bec6" stroke="#7c8791" />
    <path d="M8 2l17-1v17L8 19z" fill="#e4e8ec" stroke="#7c8791" />
    <path d="M10 4l13-1v13l-13 1z" fill="#1226ae" />
    <path d="M16 3.500 23 3v10z" fill="#4765e0" />
    <path d="M14 19h5v3h-5z" fill="#8f9aa3" />
    <path d="M5 22l16-1 4 5H4z" fill="#d3d9de" stroke="#7c8791" />
    <path d="M8 30h16" stroke="#555" />
    <path d="M16 26l5 7H11z" fill="#f0a426" />
  </svg>
);
const ErrDot = () => (
  <>
    <circle cx="10" cy="11.500" r="4.500" fill="#da3b3b" stroke="#fff" strokeWidth=".7" />
    <path d="M8 9.500l4 4M12 9.500l-4 4" stroke="#fff" strokeWidth="1.300" />
  </>
);
const Flag = () => (
  <svg width="16" height="17" viewBox="0 0 16 17">
    <path d="M2 1v15M2 1.500h6l1 1h5v7H8l-1-1H2z" fill="#fff" stroke="#2b4c58" />
    <ErrDot />
  </svg>
);
const Speaker = () => (
  <svg width="16" height="17" viewBox="0 0 16 17">
    <path d="M1 6h3l5-5v14l-5-5H1z" fill="#fff" stroke="#2b4c58" />
    <ErrDot />
  </svg>
);
const Net = () => (
  <svg width="16" height="16" viewBox="0 0 16 16" fill="none" stroke="#17343f">
    <path d="M5 3.500h10v8H5zM8 14h5M10 11.500V14" fill="#9fdcf0" />
    <path d="M1 1h4v5H1zM3 6v8h4" fill="#fff" />
  </svg>
);
const Zhong = () => (
  <svg width="14" height="16" viewBox="0 0 14 16" fill="none">
    <path d="M2 4.500h10v5.500H2zM7 1v14" stroke="#17343f" strokeWidth="3" />
    <path d="M2 4.500h10v5.500H2zM7 1v14" stroke="#e9f8fd" strokeWidth="1.200" />
  </svg>
);
const InputBox = () => (
  <svg width="16" height="16" viewBox="0 0 16 16" fill="none">
    <path d="M.5.500h15v15H.5z" fill="#fff" stroke="#17343f" />
    <path d="M5 4v2.500h5V12H8" stroke="#111" strokeWidth="1.300" />
  </svg>
);

/* ---------- data ---------- */

const navItems: { t: string; child?: boolean; pin?: boolean; gap?: boolean; on?: boolean; blue?: boolean }[] = [
  { t: "快速存取" },
  { t: "桌面", child: true, pin: true },
  { t: "下載", child: true, pin: true },
  { t: "Other", child: true, pin: true },
  { t: "圖片", child: true, pin: true },
  { t: "OneDrive", gap: true },
  { t: "本機", gap: true, blue: true },
  { t: "下載", child: true },
  { t: "文件", child: true },
  { t: "音樂", child: true },
  { t: "桌面", child: true },
  { t: "圖片", child: true },
  { t: "影片", child: true },
  { t: "本機磁碟 (C:)", child: true },
  { t: "toshiba 2T (D:)", child: true, on: true },
  { t: "seagate 500G (", child: true },
  { t: "SAMSUNG (F:)", child: true },
  { t: "SAMSUNG (F:)", gap: true },
];
const files = [
  "VR開發套件", "WEB", "zenfone ROOT", "刀劍神域實現計畫", "刀劍神域歌曲", "水域安全上課檔案", "巨匠上課",
  "布景主題", "作業系統", "哈勃天文望遠鏡", "相機照片", "英文教學", "音樂", "荒野求生秘技 合集三",
  "勒索病毒", "動漫展照片", "國中理化", "理化", "無人機", "程式庫", "資源回收筒",
];
const volumeCols: [string, number][] = [
  ["磁碟區", 128], ["配置", 76], ["類型", 69], ["檔案系統", 85], ["狀態", 77], ["容量", 96], ["可用空間", 66], ["可用百分比", 91], ["", 60],
];
const volumes = ["", "", "(C:)", "SAMSUNG", "seagate", "toshiba"];

type Res = { name: string; sub: React.ReactNode; c: string; fill?: string; on?: boolean; draw?: React.ReactNode };
const net = (a: string, b: string) => (
  <>
    <Muted>已傳送:</Muted> {a} <Muted>已接收:</Muted> {b} Kbps
  </>
);
const resources: Res[] = [
  {
    name: "CPU", sub: "15%  3.61 GHz", c: "#117dbb",
    draw: <path d="M2.500 40V1h1l1 31 3 1 3-1 3 1 3-1 3 1 5-1 4 1 8 0 5 1 8-1 6 1 8-1V40z" fill="#eef6fb" stroke="#117dbb" />,
  },
  { name: "記憶體", sub: "7.5/15.9 GB (47%)", c: "#8b12ae", draw: <path d="M2 39.500 3 21.500H59.500V39.500z" fill="#f4f0f5" stroke="#8b12ae" /> },
  {
    name: "磁碟 0 (C:)", sub: "8%", c: "#4da60c",
    draw: <path d="M3 39 4 11l1 26 5 1 3-2 2 2 2-1 1-21 1 12 1 9 4 1 1-6 1 6h2l1-11 1 11 5-1 4 2h6l3-1 3 1 2-20 1 19 7 0v2z" fill="#b6dc98" stroke="#4da60c" />,
  },
  { name: "磁碟 1 (D:)", sub: "0%", c: "#4da60c" },
  { name: "磁碟 2 (E:)", sub: "0%", c: "#4da60c" },
  { name: "磁碟 3 (F:)", sub: "97%", c: "#4da60c", on: true, draw: <path d="M3.500 39.500 4.500 2.500H59.500V39.500z" fill="#edf5e6" stroke="#4da60c" /> },
  { name: "乙太網路", sub: net("0", "0"), c: "#a74f01" },
  { name: "乙太網路", sub: net("0", "0"), c: "#a74f01" },
  { name: "乙太網路", sub: net("0", "0"), c: "#a74f01" },
  { name: "乙太網路", sub: <Muted>未連線</Muted>, c: "#c0c0c0", fill: "#f4f4f4" },
  {
    name: "Wi-Fi", sub: net("104", "48.0"), c: "#a74f01", fill: "#fffdfb",
    draw: (
      <>
        <path d="M0 3.500h60" stroke="#c58a58" />
        <path d="M4 38 5 1M7 30V1M9 1l2 18 3 2 2 10 1-5 1-25M24 1l1 30 3 0 3 3 4-4 4 3 5-1 3 2 4-1 1-12 2 10 6-1" fill="none" stroke="#ee6a4a" strokeDasharray="2 1" />
        <path d="M3 39l1-7 3 3 3-2 3 4 4-1 3-4 4 4 3 1 2-1 2 2 3-2 2 2 3-2 3 2 3-1 3 1 3-2 2 2 5-2v4z" fill="#e0b48c" stroke="#a74f01" />
      </>
    ),
  },
];
const verticals = Array.from({ length: 14 }, (_, i) => 28 + i * 37);
const rows = Array.from({ length: 9 }, (_, i) => i + 1);

const inner: { n: string; i: React.ReactNode; run?: boolean; on?: boolean; badge?: string; w?: number }[] = [
  { n: "Start", i: <WinLogo s={16} />, w: 48 },
  { n: "Search", i: <Glass />, w: 48 },
  { n: "Task view", i: <TaskView /> },
  { n: "Edge", i: <Edge /> },
  { n: "Snipping tool", i: <Snip /> },
  { n: "Explorer", i: <FolderBar />, run: true },
  { n: "Network", i: <GlobeServer /> },
  { n: "Virtual machines", i: <Vm /> },
  { n: "Telegram", i: <Plane s={24} />, run: true, badge: "209" },
  { n: "Browser", i: <FoxBlue />, run: true },
  { n: "Chrome", i: <Chrome />, run: true },
  { n: "Origin", i: <Origin />, run: true },
  { n: "Download manager", i: <Idm />, run: true },
  { n: "Visual Studio", i: <Vs />, run: true },
  { n: "Settings", i: <Gear />, run: true },
  { n: "Devices", i: <Device />, run: true },
  { n: "Task manager", i: <TmBig />, on: true },
];

/* ---------- windows ---------- */

function Explorer() {
  return (
    <Win $x={0} $y={0} $w={298} $h={651}>
      <ExplorerTop>
        <svg width="10" height="5" viewBox="0 0 10 5">
          <path d="M0 0h9.500v4.500H0z" fill="#fbe08a" stroke="#e3c04f" />
        </svg>
      </ExplorerTop>
      <RibbonTabs>
        <RibbonTab $on>常用</RibbonTab>
        <RibbonTab>共用</RibbonTab>
        <RibbonTab>檢視</RibbonTab>
      </RibbonTabs>
      <Ribbon>
        <RibbonGroup $w={160}>
          <GroupRow>
            <BigTool $w={32}><CopyIcon />複製</BigTool>
            <BigTool $w={48} $off><PasteIcon />貼上</BigTool>
            <SmallTools>
              <SmallTool><Scissors />剪下</SmallTool>
              <SmallTool><PathIcon />複製路徑</SmallTool>
              <SmallTool $off><ShortcutPaste />貼上捷徑</SmallTool>
            </SmallTools>
          </GroupRow>
          <GroupName>剪貼簿</GroupName>
        </RibbonGroup>
        <RibbonGroup $w={138}>
          <GroupRow>
            <BigTool $w={48}><MoveTo />移至<Down /></BigTool>
            <BigTool $w={36}><CopyTo />複製到<Down /></BigTool>
          </GroupRow>
          <GroupName $right>組合管理</GroupName>
        </RibbonGroup>
      </Ribbon>
      <AddressRow>
        <Chevron d="d" c="#777" s={8} />
        <svg width="13" height="14" viewBox="0 0 13 14" fill="none" stroke="#666" strokeWidth="1.800">
          <path d="M6.500 13V2M1.500 7l5-5 5 5" />
        </svg>
        <AddressBox aria-label="path">
          <Folder />
          <Chevron d="r" c="#777" s={8} />
          <button>本機</button>
          <Chevron d="r" c="#777" s={8} />
          <button>toshiba 2T (D:)</button>
          <Chevron d="r" c="#777" s={8} />
          <button>F備份</button>
        </AddressBox>
      </AddressRow>
      <Panes>
        <NavPane>
          {navItems.map((n, i) => (
            <NavItem key={i} $child={n.child} $on={n.on} $gap={n.gap} $blue={n.blue}>
              {n.t}
              {n.pin && <Pin />}
            </NavItem>
          ))}
        </NavPane>
        <NavScroll>
          <Chevron d="u" s={10} />
          <div />
          <Chevron d="d" s={10} />
        </NavScroll>
        <Files>
          <FileHead>
            <Check type="checkbox" aria-label="名稱" />
            名稱
            <svg width="9" height="9" viewBox="0 0 9 9" fill="none" stroke="#666"><path d="M1 7l3.500-3.500L8 7" /></svg>
          </FileHead>
          <FileList>
            {files.map((f) =>
              f === "程式庫" ? (
                <FileRow key={f} $on>
                  <Check type="checkbox" id="lib" defaultChecked />
                  <FileLabel htmlFor="lib"><Folder />{f}</FileLabel>
                </FileRow>
              ) : (
                <FileRow key={f}>
                  {f === "資源回收筒" ? <Bin /> : <Folder />}
                  {f}
                </FileRow>
              )
            )}
          </FileList>
        </Files>
      </Panes>
      <Status>
        <span>已選取 1 個項目</span>
        <span>狀態:<People />分享</span>
      </Status>
    </Win>
  );
}

const DiskWin = styled(Win)`
  background: #f0f0f0;
  border: 1px solid #8a8a8a;
  border-top: 0;
  nav, nav + div { background: #fff; }
`;

function DiskManagement() {
  return (
    <DiskWin $x={255} $y={0} $w={754} $h={558}>
      <DiskMenu>
        <button>檔案(F)</button>
        <button>動作(A)</button>
        <button>檢視(V)</button>
        <button>說明(H)</button>
      </DiskMenu>
      <DiskTools>
        <Arrow /><Arrow flip /><ToolSep /><PaneIcon /><ToolSep /><HelpIcon /><PaneIcon flip /><ToolSep />
        <ToolSet>
          <DriveLens /><RedX /><CheckPage /><FolderUp /><FolderUp lens /><ListIcon />
        </ToolSet>
      </DiskTools>
      <VolBox>
        <VolTable>
          <colgroup>{volumeCols.map(([n, w]) => <col key={n} width={w} />)}</colgroup>
          <thead>
            <tr>{volumeCols.map(([n]) => <th key={n}>{n}</th>)}</tr>
          </thead>
          <tbody>
            {volumes.map((v, i) => (
              <tr key={i}>
                <td><VolName><DriveSmall />{v}</VolName></td>
                {i === 0 && (
                  <>
                    <td>簡單</td><td>基本</td><td></td><td>良好 (修復</td><td>450 MB</td><td>450 MB</td><td>100 %</td>
                  </>
                )}
              </tr>
            ))}
          </tbody>
        </VolTable>
      </VolBox>
      <DiskPane>
        <DiskCard $h={103} $top={14}>
          <b><DriveSmall />磁碟 0</b>
          <p>基本</p><p>931.51 GB</p><p>連線</p>
        </DiskCard>
        <DiskCard $h={99} $top={10}>
          <b><DriveSmall off />磁碟 1</b>
          <p>抽取式</p><br /><p>沒有媒體</p>
        </DiskCard>
        <Legend><i />未配置</Legend>
      </DiskPane>
    </DiskWin>
  );
}

function ThisPc() {
  return (
    <Win $x={1009} $y={52} $h={669}>
      <PcBand $h={55} />
      <PcBand $h={97} $c="#f4f6f6" />
      <PcBand $h={7} />
      <PcBand $h={21} />
      <PcBand $h={26} />
      <PcGroup>
        <PcItem><BigFolder kind="music" />音樂</PcItem>
        <PcItem><BigFolder kind="film" />影片</PcItem>
      </PcGroup>
      <PcGroup $drives>
        <PcItem>
          <BigDrive shared />
          <span>toshi<Capacity /><Muted>剩餘</Muted></span>
        </PcItem>
        <PcItem><BigDrive />USB</PcItem>
        <PcItem><BigDrive />USB</PcItem>
      </PcGroup>
    </Win>
  );
}

const TmWin = styled(Win)`
  border: 1px solid #8d8d8d;
`;

function TaskManager() {
  return (
    <TmWin $x={297} $y={73} $w={871}>
      <TmTitle>
        <TmIcon />
        <h1>工作管理員</h1>
        <CaptionButton aria-label="Minimize">
          <svg width="11" height="11" stroke="#000"><path d="M0 5.500h11" /></svg>
        </CaptionButton>
        <CaptionButton aria-label="Maximize">
          <svg width="11" height="11" stroke="#000" fill="none"><path d="M.5.500h10v10H.5z" /></svg>
        </CaptionButton>
        <CaptionButton aria-label="Close">
          <svg width="11" height="11" stroke="#000"><path d="M.5.500l10 10M10.500.500l-10 10" /></svg>
        </CaptionButton>
      </TmTitle>
      <TmMenu>
        <button>檔案(F)</button>
        <button>選項(O)</button>
        <button>檢視(V)</button>
      </TmMenu>
      <TmTabs role="tablist">
        {["處理程序", "效能", "應用程式歷程記錄", "開機", "使用者", "詳細資料", "服務"].map((t) => (
          <TmTab key={t} role="tab" $on={t === "效能"}>{t}</TmTab>
        ))}
      </TmTabs>
      <TmBody>
        <ResourceList>
          {resources.map((r, i) => (
            <li key={i}>
              <Resource $on={r.on}>
                <svg width="60" height="40" viewBox="0 0 60 40">
                  <rect x=".5" y=".5" width="59" height="39" fill={r.fill || "#fff"} />
                  {r.draw}
                  <rect x=".5" y=".5" width="59" height="39" fill="none" stroke={r.c} />
                </svg>
                <ResourceText>
                  <ResourceName>{r.name}</ResourceName>
                  {r.sub}
                </ResourceText>
              </Resource>
            </li>
          ))}
        </ResourceList>
        <Divider />
        <Detail>
          <DetailHead>
            <h2>磁碟 3 (F:)</h2>
            <p>Samsung M3 Portable USB Device</p>
          </DetailHead>
          <Caption><span>啟用時間</span><span>100%</span></Caption>
          <Plot $h={359}>
            <svg viewBox="0 0 545 357" preserveAspectRatio="none" fill="none">
              <path d="M28 357 37 9.500l14 1 12 0 10-1 14 1 16 0 14-1 12 1 14-1 14 1 10 0 16-1 10 1 14-1 14 1 20 0 14-1h50l12 1 14-1h90l12 1 14-1h46l16 1 18-1 12 1 9 0V357z" fill="#edf5e6" />
              <path d={verticals.map((x) => `M${x}.5 0V357`).join("") + rows.map((r) => `M0 ${r * 36 - 0.5}H545`).join("")} stroke="#cfe3c3" />
              <path d="M28 357 37 9.500l14 1 12 0 10-1 14 1 16 0 14-1 12 1 14-1 14 1 10 0 16-1 10 1 14-1 14 1 20 0 14-1h50l12 1 14-1h90l12 1 14-1h46l16 1 18-1 12 1 9 0" stroke="#4da60c" strokeWidth="1.300" />
            </svg>
          </Plot>
          <Axis><span>30 秒</span><span>0</span></Axis>
          <Caption><span>磁碟傳輸速率</span><span>250 MB/秒</span></Caption>
          <Plot $h={67}>
            <svg viewBox="0 0 545 65" preserveAspectRatio="none" fill="none">
              <path d={verticals.map((x) => `M${x}.5 0V65`).join("") + [6, 13, 19, 26, 39, 46, 52, 59].map((y) => `M0 ${y}.5H545`).join("")} stroke="#dcecd3" />
              <path d="M0 32.500H545" stroke="#a9d7a0" />
              <path d="M28 65 37 38.500H545" stroke="#86c53a" strokeWidth="1.300" strokeDasharray="3 1" />
            </svg>
            <PlotMark>125 MB/秒</PlotMark>
          </Plot>
          <Axis><span>30 秒</span><span>0</span></Axis>
          <Stats>
            <StatGrid>
              <StatRow>
                <Stat $w={68}><dt>啟用時間</dt><dd>97%</dd></Stat>
                <Stat $w={140}><dt>平均回應時間</dt><dd>487 毫秒</dd></Stat>
              </StatRow>
              <StatRow>
                <Stat $w={97} $line="solid"><dt>讀取速度</dt><dd>0 KB/秒</dd></Stat>
                <Stat $w={118} $line="dotted"><dt>寫入速度</dt><dd>110 MB/秒</dd></Stat>
              </StatRow>
            </StatGrid>
            <Facts>
              <dt>容量:</dt><dd>932 GB</dd>
              <dt>已格式化:</dt><dd>932 GB</dd>
              <dt>系統磁碟:</dt><dd>否</dd>
              <dt>分頁檔案:</dt><dd>否</dd>
            </Facts>
          </Stats>
        </Detail>
      </TmBody>
      <TmFooter>
        <button>
          <svg width="19" height="19" viewBox="0 0 19 19" fill="none" stroke="#8a8a8a">
            <circle cx="9.500" cy="9.500" r="9" />
            <path d="M5.500 11l4-4 4 4" strokeWidth="1.500" />
          </svg>
          較少詳細資料(D)
        </button>
        <i />
        <a href="#monitor">
          <svg width="17" height="17" viewBox="0 0 17 17">
            <circle cx="8.500" cy="8.500" r="7.500" fill="#fff" stroke="#8a8a8a" strokeWidth="1.600" />
            <circle cx="8.500" cy="8.500" r="5.500" fill="none" stroke="#bdbdbd" strokeDasharray="1 1.500" />
            <path d="M4.500 4.500 6.500 4l5 8-1.500.5z" fill="#cf1f2b" stroke="#cf1f2b" />
          </svg>
          開啟資源監視器
        </a>
      </TmFooter>
    </TmWin>
  );
}

export default function App() {
  return (
    <Screen>
      <Global />
      <ViewerBar>
        <ViewerTabs>
          <HomeTab aria-label="Home"><TvLogo s={15} w={14} /></HomeTab>
          <SessionTab>
            windasd
            <svg width="15" height="14" viewBox="0 0 24 23" fill="none" stroke="#8ebdf0" strokeWidth="2">
              <path d="M12 2l3 7h7l-5.500 5 2 7.500L12 17l-6.500 4.500 2-7.500L2 9h7z" />
            </svg>
            <svg width="9" height="9" viewBox="0 0 9 9" stroke="#000" strokeWidth="2"><path d="M1 1l7 7M8 1 1 8" /></svg>
            <TabPointer />
          </SessionTab>
          <AddTab aria-label="Add">
            <svg width="11" height="11" viewBox="0 0 11 11" stroke="#000" strokeWidth="3"><path d="M5.500 0v11M0 5.500h11" /></svg>
          </AddTab>
        </ViewerTabs>
        <License>Free license (non-commercial use only)</License>
        <ViewerButtons>
          <ViewerButton $w={27} aria-label="Minimize">
            <svg width="10" height="10"><path d="M0 6h10v3H0z" /></svg>
          </ViewerButton>
          <ViewerButton $w={26} aria-label="Restore">
            <svg width="10" height="10" fill="none" stroke="#000"><path d="M1 3h6v6H1z" strokeWidth="2" /><path d="M3 .5h6.500V7" /></svg>
          </ViewerButton>
          <ViewerButton $w={46} aria-label="Close">
            <svg width="9" height="9" stroke="#000" strokeWidth="2.400"><path d="M1 1l7 7M8 1 1 8" /></svg>
          </ViewerButton>
        </ViewerButtons>
      </ViewerBar>

      <Middle>
        <Remote>
          <Desktop>
            <Shortcut><Blank />WinRAR</Shortcut>
            <Shortcut><Blank />Internet Downlo...</Shortcut>
            <Shortcut><Plane /><LinkArrow />Telegram</Shortcut>
            <Shortcut><Obs /><LinkArrow />OBS Studio</Shortcut>
            <Shortcut><LineIcon /><LinkArrow />LINE</Shortcut>
            <Shortcut><TeamSpeak /><LinkArrow />TeamSpeak 3 Client</Shortcut>
          </Desktop>
          <ThisPc />
          <Explorer />
          <DiskManagement />
          <TaskManager />
          <FloatBar>
            <svg width="13" height="18" viewBox="0 0 13 18">
              <path d="M0 0h13v18H0z" fill="#c9c9c9" />
              <path d="M1.500 0v18M5.500 0v18M9.500 0v18" stroke="#fff" strokeWidth="2" strokeDasharray="2 2" />
            </svg>
            <svg width="11" height="11" viewBox="0 0 11 11" fill="none" stroke="#777">
              <path d="M.5 3.500v-3h3M7.500.500h3v3M.5 7.500v3h3M7.500 10.500h3v-3M1 1l3 3M10 1 7 4M1 10l3-3M10 10 7 7" />
            </svg>
            <svg width="15" height="9" viewBox="0 0 15 9" fill="none" stroke="#777" strokeWidth="2.400"><path d="M1 1l6.500 6L14 1" /></svg>
          </FloatBar>
          <ResizeCursor width="12" height="9" viewBox="0 0 12 9">
            <path d="M0 4.500 4 1v2.500h4V1l4 3.500L8 8V5.500H4V8z" fill="#111" />
          </ResizeCursor>
          <InnerBar>
            {inner.map((b) => (
              <InnerButton key={b.n} aria-label={b.n} $w={b.w} $run={b.run} $on={b.on}>
                {b.i}
                {b.badge && <Badge>{b.badge}</Badge>}
              </InnerButton>
            ))}
          </InnerBar>
        </Remote>
        <VBar>
          <ScrollButton aria-label="Up"><Chevron d="u" /></ScrollButton>
          <VThumb>
            <svg width="7" height="8" stroke="#555" strokeWidth="2"><path d="M0 1h7M0 4h7M0 7h7" /></svg>
          </VThumb>
          <ScrollButton aria-label="Down"><Chevron d="d" /></ScrollButton>
        </VBar>
      </Middle>
      <HBar>
        <ScrollButton aria-label="Left"><Chevron d="l" /></ScrollButton>
        <HTrack>
          <HThumb>
            <svg width="8" height="7" stroke="#555" strokeWidth="2"><path d="M1 0v7M4 0v7M7 0v7" /></svg>
          </HThumb>
        </HTrack>
        <ScrollButton aria-label="Right"><Chevron d="r" /></ScrollButton>
      </HBar>

      <HostBar>
        <HostButton $w={50} aria-label="Start"><WinLogo s={27} /></HostButton>
        <HostButton $w={62} aria-label="Server Manager"><ServerMgr /></HostButton>
        <HostButton $w={63} aria-label="PowerShell"><PowerShell /></HostButton>
        <HostButton $w={60} $open aria-label="Explorer"><HostFolder /></HostButton>
        <HostButton $w={60} $open aria-label="Servers"><Servers /></HostButton>
        <HostButton $w={60} $open aria-label="Firefox"><Firefox /></HostButton>
        <HostButton $w={56} $open aria-label="Remote Desktop"><Rdp /></HostButton>
        <HostButton $w={58} $open aria-label="TeamViewer"><TvLogo s={30} w={26} /></HostButton>
        <Tray>
          <Flag /><Speaker /><Net /><Zhong /><InputBox />
          <Clock>3:39 PM<br />9/4/2016</Clock>
        </Tray>
      </HostBar>
    </Screen>
  );
}
